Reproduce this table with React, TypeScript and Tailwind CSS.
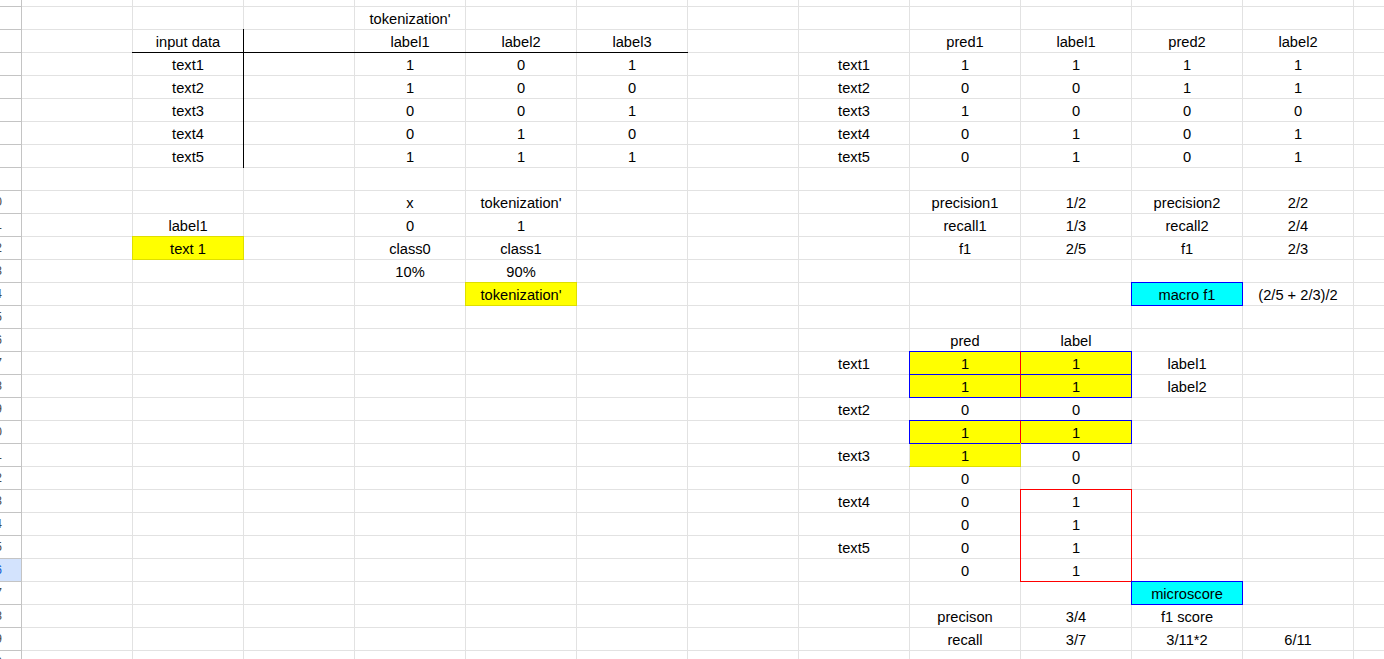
import React from "react";

type Cell = { t?: string; s?: string };

const S: Record<string, { bg: string; ov: string }> = {
  y: { bg: "bg-[#ffff00]", ov: "border border-[#dede00]" },
  yrb: { bg: "bg-[#ffff00]", ov: "border-r border-b border-[#dede00]" },
  c: { bg: "bg-[#00ffff]", ov: "border border-[#0000ff]" },
  ybl: {
    bg: "bg-[#ffff00]",
    ov: "border border-t-[#0000ff] border-b-[#0000ff] border-l-[#0000ff] border-r-[#ff0000]",
  },
  ybr: {
    bg: "bg-[#ffff00]",
    ov: "border border-t-[#0000ff] border-b-[#0000ff] border-r-[#0000ff] border-l-[#ff0000]",
  },
  rt: { bg: "", ov: "border-t border-l border-r border-[#ff0000]" },
  rm: { bg: "", ov: "border-l border-r border-[#ff0000]" },
  rb: { bg: "", ov: "border-b border-l border-r border-[#ff0000]" },
  kb: { bg: "", ov: "border-b border-black" },
  kr: { bg: "", ov: "border-r border-black" },
  kbr: { bg: "", ov: "border-r border-b border-black" },
};

const C = (t?: string, s?: string): Cell => ({ t, s });

// column indices: A0 B1 C2 D3 E4 F5 G6 H7 I8 J9 K10 L11 M12
const data: Record<number, Record<number, Cell>> = {
  2: { 3: C("tokenization'") },
  3: {
    1: C("input data", "kbr"),
    2: C(undefined, "kb"),
    3: C("label1", "kb"),
    4: C("label2", "kb"),
    5: C("label3", "kb"),
    8: C("pred1"),
    9: C("label1"),
    10: C("pred2"),
    11: C("label2"),
  },
  4: { 1: C("text1", "kr"), 3: C("1"), 4: C("0"), 5: C("1"), 7: C("text1"), 8: C("1"), 9: C("1"), 10: C("1"), 11: C("1") },
  5: { 1: C("text2", "kr"), 3: C("1"), 4: C("0"), 5: C("0"), 7: C("text2"), 8: C("0"), 9: C("0"), 10: C("1"), 11: C("1") },
  6: { 1: C("text3", "kr"), 3: C("0"), 4: C("0"), 5: C("1"), 7: C("text3"), 8: C("1"), 9: C("0"), 10: C("0"), 11: C("0") },
  7: { 1: C("text4", "kr"), 3: C("0"), 4: C("1"), 5: C("0"), 7: C("text4"), 8: C("0"), 9: C("1"), 10: C("0"), 11: C("1") },
  8: { 1: C("text5", "kr"), 3: C("1"), 4: C("1"), 5: C("1"), 7: C("text5"), 8: C("0"), 9: C("1"), 10: C("0"), 11: C("1") },
  10: { 3: C("x"), 4: C("tokenization'"), 8: C("precision1"), 9: C("1/2"), 10: C("precision2"), 11: C("2/2") },
  11: { 1: C("label1"), 3: C("0"), 4: C("1"), 8: C("recall1"), 9: C("1/3"), 10: C("recall2"), 11: C("2/4") },
  12: { 1: C("text 1", "y"), 3: C("class0"), 4: C("class1"), 8: C("f1"), 9: C("2/5"), 10: C("f1"), 11: C("2/3") },
  13: { 3: C("10%"), 4: C("90%") },
  14: { 4: C("tokenization'", "y"), 10: C("macro f1", "c"), 11: C("(2/5 + 2/3)/2") },
  16: { 8: C("pred"), 9: C("label") },
  17: { 7: C("text1"), 8: C("1", "ybl"), 9: C("1", "ybr"), 10: C("label1") },
  18: { 8: C("1", "ybl"), 9: C("1", "ybr"), 10: C("label2") },
  19: { 7: C("text2"), 8: C("0"), 9: C("0") },
  20: { 8: C("1", "ybl"), 9: C("1", "ybr") },
  21: { 7: C("text3"), 8: C("1", "yrb"), 9: C("0") },
  22: { 8: C("0"), 9: C("0") },
  23: { 7: C("text4"), 8: C("0"), 9: C("1", "rt") },
  24: { 8: C("0"), 9: C("1", "rm") },
  25: { 7: C("text5"), 8: C("0"), 9: C("1", "rm") },
  26: { 8: C("0"), 9: C("1", "rb") },
  27: { 10: C("microscore", "c") },
  28: { 8: C("precison"), 9: C("3/4"), 10: C("f1 score") },
  29: { 8: C("recall"), 9: C("3/7"), 10: C("3/11*2"), 11: C("6/11") },
};

const rowNums = Array.from({ length: 30 }, (_, i) => i + 1);
const colNums = Array.from({ length: 13 }, (_, i) => i);

function Row({ n }: { n: number }) {
  const cells = data[n] || {};
  const selected = n === 26;
  const h = n === 1 ? "h-[7px]" : "h-[23px]";
  return (
    <div className={`flex shrink-0 ${h}`}>
      <div
        className={`w-[22px] shrink-0 h-full border-r border-b border-[#c4c4c4] flex items-center justify-end overflow-hidden ${
          selected ? "bg-[#d3e3fd]" : "bg-white"
        }`}
      >
        {n >= 10 && (
          <span
            className={`mr-[19px] text-[12px] leading-[14px] whitespace-nowrap ${
              selected ? "text-[#0b57d0]" : "text-[#444746]"
            }`}
          >
            {n}
          </span>
        )}
      </div>
      {colNums.map((c) => {
        const cell = cells[c];
        const st = cell?.s ? S[cell.s] : undefined;
        return (
          <div
            key={c}
            className={`relative w-[111px] shrink-0 h-full border-r border-b border-[#e2e2e2] flex items-end justify-center pb-[1px] ${
              st?.bg ?? ""
            }`}
          >
            {st && (
              <div
                className={`absolute -left-px -top-px w-[112px] h-[24px] pointer-events-none ${st.ov}`}
              />
            )}
            {cell?.t && (
              <span className="relative text-[14.67px] leading-[17px] text-black whitespace-nowrap">
                {cell.t}
              </span>
            )}
          </div>
        );
      })}
    </div>
  );
}

export default function App() {
  return (
    <div className="w-[1384px] h-[659px] overflow-hidden bg-white font-['Liberation_Sans',Arial,sans-serif] flex flex-col">
      {rowNums.map((n) => (
        <Row key={n} n={n} />
      ))}
    </div>
  );
}
